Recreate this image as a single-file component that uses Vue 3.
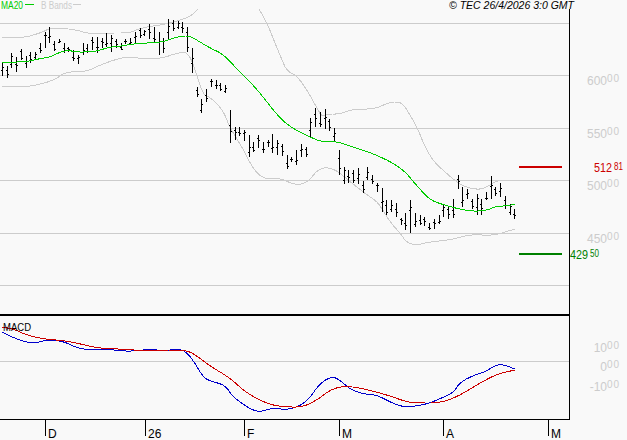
<script setup>
// hi/lo of each daily bar, px in chart space
const hiLo = [
  [62,76],[66,78],[53,68],[57,72],[49,60],[56,68],[52,63],[52,59],[43,53],[32,48],[27,43],[41,51],[39,43],[43,53],[47,52],
  [50,61],[55,64],[43,55],[44,53],[37,50],[37,53],[38,48],[33,47],[35,52],[39,48],[43,50],[39,44],[38,44],[32,43],[28,38],
  [30,36],[24,39],[27,42],[32,55],[38,53],[19,40],[20,31],[21,29],[22,33],[27,52],[48,73],[87,97],[99,113],[89,102],
  [79,87],[80,89],[83,91],[85,93],
  [110,143],[127,140],[127,136],[130,141],[135,157],[142,152],[135,148],[142,153],[140,147],[134,153],[140,155],[144,156],
  [155,169],[157,162],[150,165],[144,157],[147,157],[118,138],[108,127],[112,127],[109,129],[119,131],[128,142],[150,175],
  [167,184],[170,183],[170,183],[168,184],[181,193],[167,180],[175,184],[183,192],[188,212],[200,215],[200,212],[203,217],
  [218,225],[213,230],[200,233],[213,227],
  [215,225],[217,226],[223,230],[219,229],[215,224],[204,217],[207,219],[199,218],[175,189],[187,207],[189,199],[199,209],
  [194,215],[199,215],[192,200],[176,199],[187,196],[183,197],[196,209],[204,215],[209,219]
]

const openAt = [0.6, 0.3, 0.75, 0.45, 0.2]
const closeAt = [0.35, 0.7, 0.2, 0.55, 0.8, 0.4, 0.65]

const bars = hiLo.map(([hi, lo], i) => {
  const x = Math.round(2 + i * 4.745) + 0.5
  return {
    x,
    hi,
    lo,
    open: Math.round(hi + (lo - hi) * openAt[i % 5]) + 0.5,
    close: Math.round(hi + (lo - hi) * closeAt[i % 7]) + 0.5
  }
})

// round off the corners of a hand-read curve
function smooth(str) {
  let pts = str.split(' ').map((p) => p.split(',').map(Number))
  for (let pass = 0; pass < 2; pass++) {
    const next = [pts[0]]
    for (let i = 0; i < pts.length - 1; i++) {
      const [ax, ay] = pts[i]
      const [bx, by] = pts[i + 1]
      next.push([ax * 0.75 + bx * 0.25, ay * 0.75 + by * 0.25])
      next.push([ax * 0.25 + bx * 0.75, ay * 0.25 + by * 0.75])
    }
    next.push(pts[pts.length - 1])
    pts = next
  }
  return pts.map((p) => p.join(',')).join(' ')
}

const ma20 = smooth('2,62 12,62 20,62 30,61 38,59 50,57 58,53 68,50 75,52 88,52 97,51 110,47 122,46 133,44 147,43 163,42 173,38 183,36 190,36 200,42 210,48 223,54 238,70 257,89 277,115 290,127 310,137 322,142 335,141 353,147 377,155 402,168 417,186 430,200 444,205 467,211 485,211 497,206 507,206 515,204')
const bandTopA = smooth('2,37 13,38 27,37 43,32 50,28 73,29 90,34 107,33 130,33 140,28 167,24 190,17 198,9')
const bandTopB = smooth('259,9 267,23 275,43 282,60 287,71 297,76 307,90 317,108 322,117 328,114 340,114 353,109 375,109 390,102 402,102 410,115 417,127 425,147 434,162 445,172 459,184 472,189 484,189 497,180 515,180')
const bandLow = smooth('2,86 17,87 33,86 55,80 63,73 80,71 88,71 100,65 117,59 128,57 147,59 163,58 177,53 187,52 193,63 203,95 210,97 223,110 230,128 242,147 252,167 263,179 280,178 295,185 307,183 320,167 335,169 348,180 367,195 378,202 390,222 400,233 407,243 417,245 429,242 450,240 472,234 492,236 515,229')
const macd = smooth('2,332 12,337 25,342 37,343 45,340 63,341 77,348 90,350 107,349 120,351 137,351 150,349 163,351 177,349 185,351 193,360 203,377 210,381 225,385 233,397 250,409 260,412 272,408 290,410 307,402 320,383 333,376 342,382 350,389 363,394 377,395 390,402 403,407 417,406 430,403 444,397 454,392 460,382 477,374 485,372 499,363 515,369')
const signal = smooth('2,327 13,329 27,335 43,339 68,341 97,348 108,348 128,350 143,350 183,350 193,353 210,366 230,378 243,390 257,399 272,405 285,407 303,407 317,400 333,388 350,386 373,391 390,396 407,402 417,403 439,403 457,397 480,383 497,374 515,370')

const gridY = [23, 75, 128, 180, 233, 285, 361]
const months = [
  { x: 45, label: 'D' },
  { x: 145, label: '26' },
  { x: 244, label: 'F' },
  { x: 339, label: 'M' },
  { x: 443, label: 'A' },
  { x: 548, label: 'M' }
]
const priceLabels = [
  { main: '600', y: 85 },
  { main: '550', y: 138 },
  { main: '500', y: 190 },
  { main: '450', y: 243 },
  { main: '10', y: 352 },
  { main: '0', y: 371 },
  { main: '-10', y: 391 }
]
</script>

<template>
  <svg class="chart" width="627" height="440" viewBox="0 0 627 440">
    <g class="crisp">
      <line v-for="y in gridY" :key="y" class="grid" x1="0" x2="569" :y1="y + 0.5" :y2="y + 0.5" />
    </g>

    <!-- bollinger + moving average -->
    <g class="crisp" fill="none">
      <polyline class="band" :points="bandTopA" />
      <polyline class="band" :points="bandTopB" />
      <polyline class="band" :points="bandLow" />
    </g>

    <g class="crisp">
      <g v-for="b in bars" :key="b.x" class="bar">
        <line :x1="b.x" :x2="b.x" :y1="b.hi" :y2="b.lo" />
        <line :x1="b.x - 1.5" :x2="b.x" :y1="b.open" :y2="b.open" />
        <line :x1="b.x" :x2="b.x + 1.5" :y1="b.close" :y2="b.close" />
      </g>
    </g>

    <polyline class="crisp ma" fill="none" :points="ma20" />

    <!-- macd -->
    <g class="crisp" fill="none">
      <polyline class="macd" :points="macd" />
      <polyline class="signal" :points="signal" />
    </g>

    <!-- frame -->
    <g class="crisp">
      <line class="axis" x1="569.5" x2="569.5" y1="9" y2="419" />
      <line class="axis" x1="0" x2="570" y1="419.5" y2="419.5" />
      <rect x="0" y="314" width="569" height="2" fill="#000" />
      <line v-for="m in months" :key="m.x" class="axis" :x1="m.x + 0.5" :x2="m.x + 0.5" y1="419" y2="436" />
      <rect x="519" y="166" width="43" height="2" fill="#cc0000" />
      <rect x="519" y="253" width="43" height="2" fill="#008000" />
      <rect x="25" y="4" width="9" height="1" fill="#00cc00" />
      <rect x="73" y="4" width="8" height="1" fill="#cccccc" />
    </g>

    <text class="legend green" x="1" y="9" textLength="22" lengthAdjust="spacingAndGlyphs">MA20</text>
    <text class="legend gray" x="41" y="9" textLength="31" lengthAdjust="spacingAndGlyphs">B Bands</text>
    <text class="legend" x="3" y="331" textLength="28" lengthAdjust="spacingAndGlyphs">MACD</text>
    <text class="copy" x="449" y="9" textLength="125" lengthAdjust="spacingAndGlyphs">© TEC 26/4/2026 3:0 GMT</text>

    <text v-for="m in months" :key="m.label + m.x" class="month" :x="m.x + 3" y="438">{{ m.label }}</text>

    <g v-for="p in priceLabels" :key="p.main + p.y" class="gray">
      <text class="big" x="607" :y="p.y" text-anchor="end">{{ p.main }}</text>
      <text class="small" x="607" :y="p.y - 3" textLength="12">00</text>
    </g>

    <g class="red">
      <text class="big" x="594" y="172" textLength="18" lengthAdjust="spacingAndGlyphs">512</text>
      <text class="small" x="614" y="170" textLength="9" lengthAdjust="spacingAndGlyphs">81</text>
    </g>
    <g class="dkgreen">
      <text class="big" x="570" y="259" textLength="18" lengthAdjust="spacingAndGlyphs">429</text>
      <text class="small" x="590" y="257" textLength="9" lengthAdjust="spacingAndGlyphs">50</text>
    </g>
  </svg>
</template>

<style scoped>
.chart {
  display: block;
  background: #f9f9f9;
  font-family: "Liberation Sans", Arial, sans-serif;
}

.crisp {
  shape-rendering: crispEdges;
}

.grid {
  stroke: #cccccc;
  stroke-width: 1;
}

.band {
  stroke: #cccccc;
  stroke-width: 1;
}

.bar line {
  stroke: #000;
  stroke-width: 1;
}

.ma {
  stroke: #00cc00;
  stroke-width: 1;
}

.macd {
  stroke: #0000cc;
  stroke-width: 1;
}

.signal {
  stroke: #cc0000;
  stroke-width: 1;
}

.axis {
  stroke: #000;
  stroke-width: 1;
}

.legend {
  font-size: 10px;
  fill: #000;
}

.copy {
  font-size: 10px;
  font-style: italic;
  fill: #000;
}

.month {
  font-size: 12px;
  fill: #000;
}

.big {
  font-size: 12px;
}

.small {
  font-size: 10px;
}

.legend.green {
  fill: #00cc00;
}

.legend.gray,
.gray text {
  fill: #cccccc;
}

.red text {
  fill: #cc0000;
}

.dkgreen text {
  fill: #008000;
}
</style>
